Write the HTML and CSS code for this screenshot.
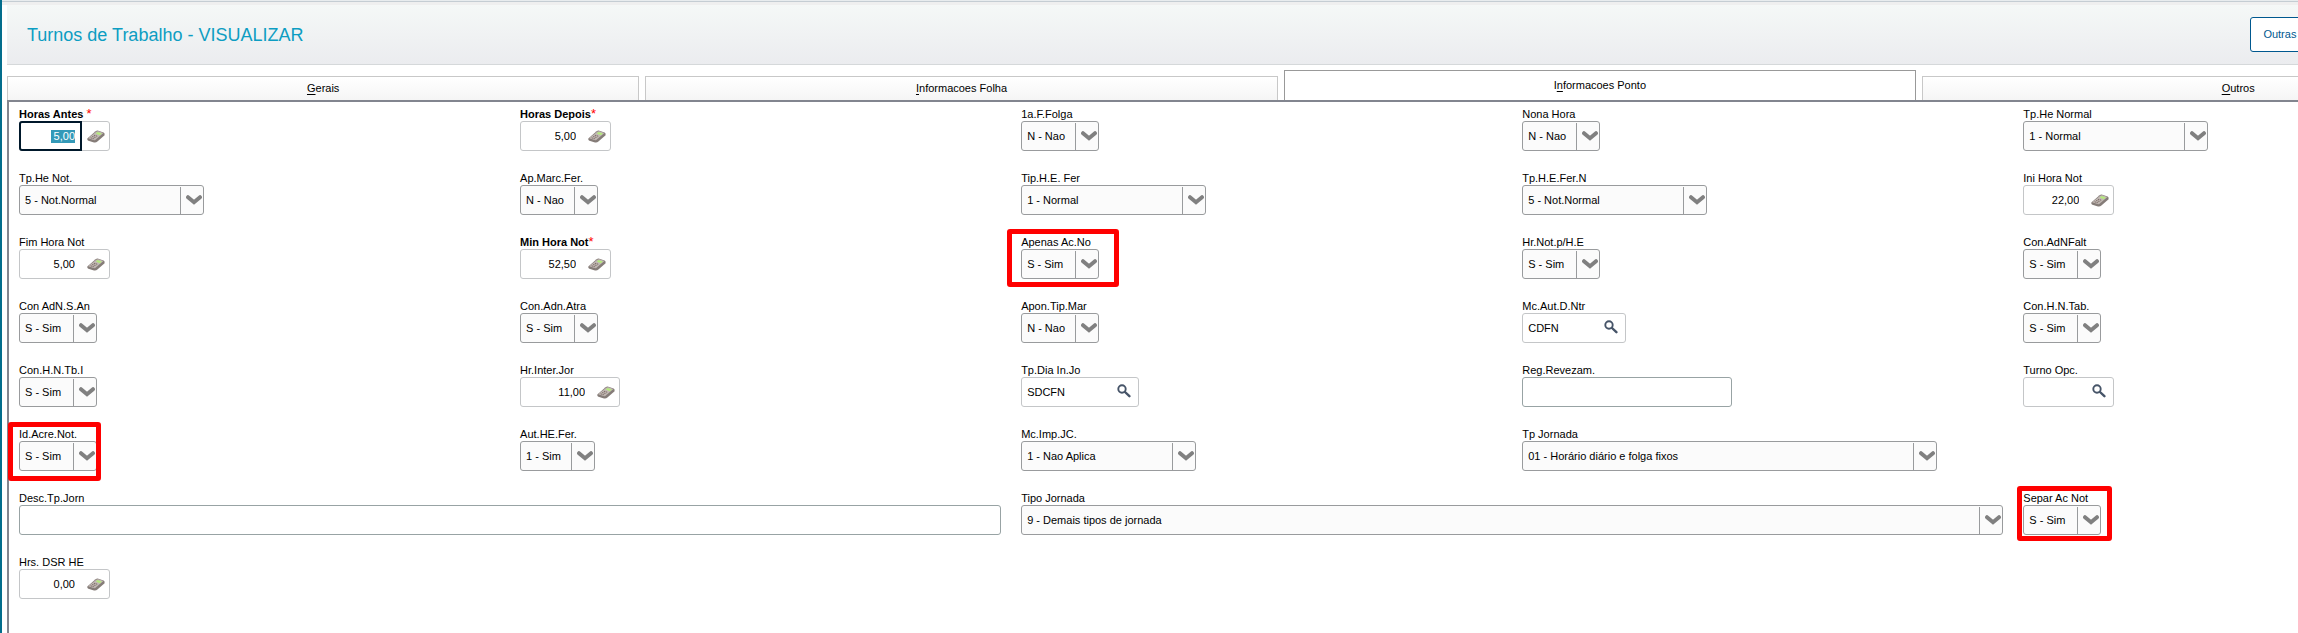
FILE: index.html
```html
<!DOCTYPE html>
<html lang="pt-BR">
<head>
  <meta charset="UTF-8" />
  <meta name="viewport" content="width=device-width, initial-scale=1" />
  <title>Turnos de Trabalho</title>
  <link rel="stylesheet" href="styles.css">
</head>
<body>

  <svg class="sprite" aria-hidden="true">
    <symbol id="chevron" viewBox="0 0 16 10">
      <path d="M2 2.2 L8 7.2 L14 2.2" fill="none" stroke="#808080" stroke-width="4" stroke-linecap="round" />
    </symbol>
    <symbol id="calc" viewBox="0 0 18 13">
      <path d="M.3 8.4 L8.6 1.2 Q9.8 .3 11.4 .7 L16.6 2.4 Q18 3.1 17.6 5.2 L10.4 11.6 Q9 12.8 7 12.4 L1.4 10.8 Q0 10 .3 8.4Z" fill="#857c78" />
      <path d="M1.2 8.2 L9.2 1.8 Q10.2 1 11.4 1.3 L16.4 3 L8.8 9.6 Q7.8 10.4 6.6 10.1Z" fill="#c2b9b4" />
      <path d="M8.8 3.4 L10.6 2 L14.8 3.4 L12.8 5.2Z" fill="#b4ea7c" />
      <path d="M3.6 7.8 L7.6 9 M5.2 6.5 L9.2 7.7 M6.8 5.2 L10.8 6.4" stroke="#7a6a66" stroke-width="1" stroke-dasharray="1.4 .6" />
    </symbol>
    <symbol id="lupa" viewBox="0 0 14 14">
      <circle cx="5" cy="5" r="3.7" fill="none" stroke="#465468" stroke-width="1.9" />
      <path d="M8 8 L12.4 12.2" stroke="#465468" stroke-width="2.4" stroke-linecap="round" />
    </symbol>
  </svg>

  <div class="screen">
    <header class="title-bar">
      <h1>Turnos de Trabalho - VISUALIZAR</h1>
      <button type="button" class="btn-outras">Outras</button>
    </header>

    <nav class="tabs">
      <button type="button" class="tab"><u>G</u>erais</button>
      <button type="button" class="tab"><u>I</u>nformacoes Folha</button>
      <button type="button" class="tab active">I<u>n</u>formacoes Ponto</button>
      <button type="button" class="tab"><u>O</u>utros</button>
    </nav>

    <form class="panel">
      <div class="field required">
        <label for="horasAntes">Horas Antes <em>*</em></label>
        <div class="box number">
          <input type="text" id="horasAntes" value=" 5,00">
          <svg class="icon"><use href="#calc" /></svg>
        </div>
      </div>
      <div class="field required">
        <label for="horasDepois">Horas Depois<em>*</em></label>
        <div class="box number">
          <input type="text" id="horasDepois" value="5,00">
          <svg class="icon"><use href="#calc" /></svg>
        </div>
      </div>
      <div class="field">
        <label for="folga">1a.F.Folga</label>
        <div class="box combo">
          <select id="folga"><option>N - Nao</option></select>
          <svg class="arrow"><use href="#chevron" /></svg>
        </div>
      </div>
      <div class="field">
        <label for="nonaHora">Nona Hora</label>
        <div class="box combo">
          <select id="nonaHora"><option>N - Nao</option></select>
          <svg class="arrow"><use href="#chevron" /></svg>
        </div>
      </div>
      <div class="field">
        <label for="heNormal">Tp.He Normal</label>
        <div class="box combo large">
          <select id="heNormal"><option>1 - Normal</option></select>
          <svg class="arrow"><use href="#chevron" /></svg>
        </div>
      </div>

      <div class="field">
        <label for="heNot">Tp.He Not.</label>
        <div class="box combo large">
          <select id="heNot"><option>5 - Not.Normal</option></select>
          <svg class="arrow"><use href="#chevron" /></svg>
        </div>
      </div>
      <div class="field">
        <label for="marcFer">Ap.Marc.Fer.</label>
        <div class="box combo">
          <select id="marcFer"><option>N - Nao</option></select>
          <svg class="arrow"><use href="#chevron" /></svg>
        </div>
      </div>
      <div class="field">
        <label for="heFer">Tip.H.E. Fer</label>
        <div class="box combo large">
          <select id="heFer"><option>1 - Normal</option></select>
          <svg class="arrow"><use href="#chevron" /></svg>
        </div>
      </div>
      <div class="field">
        <label for="heFerN">Tp.H.E.Fer.N</label>
        <div class="box combo large">
          <select id="heFerN"><option>5 - Not.Normal</option></select>
          <svg class="arrow"><use href="#chevron" /></svg>
        </div>
      </div>
      <div class="field">
        <label for="iniHora">Ini Hora Not</label>
        <div class="box number">
          <input type="text" id="iniHora" value="22,00">
          <svg class="icon"><use href="#calc" /></svg>
        </div>
      </div>

      <div class="field">
        <label for="fimHora">Fim Hora Not</label>
        <div class="box number">
          <input type="text" id="fimHora" value="5,00">
          <svg class="icon"><use href="#calc" /></svg>
        </div>
      </div>
      <div class="field required">
        <label for="minHora">Min Hora Not<em>*</em></label>
        <div class="box number">
          <input type="text" id="minHora" value="52,50">
          <svg class="icon"><use href="#calc" /></svg>
        </div>
      </div>
      <div class="field">
        <label for="apenasAc">Apenas Ac.No</label>
        <div class="box combo">
          <select id="apenasAc"><option>S - Sim</option></select>
          <svg class="arrow"><use href="#chevron" /></svg>
        </div>
        <span class="mark mark-apenas"></span>
      </div>
      <div class="field">
        <label for="hrNot">Hr.Not.p/H.E</label>
        <div class="box combo">
          <select id="hrNot"><option>S - Sim</option></select>
          <svg class="arrow"><use href="#chevron" /></svg>
        </div>
      </div>
      <div class="field">
        <label for="adnFalt">Con.AdNFalt</label>
        <div class="box combo">
          <select id="adnFalt"><option>S - Sim</option></select>
          <svg class="arrow"><use href="#chevron" /></svg>
        </div>
      </div>

      <div class="field">
        <label for="adnSan">Con AdN.S.An</label>
        <div class="box combo">
          <select id="adnSan"><option>S - Sim</option></select>
          <svg class="arrow"><use href="#chevron" /></svg>
        </div>
      </div>
      <div class="field">
        <label for="adnAtra">Con.Adn.Atra</label>
        <div class="box combo">
          <select id="adnAtra"><option>S - Sim</option></select>
          <svg class="arrow"><use href="#chevron" /></svg>
        </div>
      </div>
      <div class="field">
        <label for="tipMar">Apon.Tip.Mar</label>
        <div class="box combo">
          <select id="tipMar"><option>N - Nao</option></select>
          <svg class="arrow"><use href="#chevron" /></svg>
        </div>
      </div>
      <div class="field">
        <label for="autNtr">Mc.Aut.D.Ntr</label>
        <div class="box lookup w104">
          <input type="text" id="autNtr" value="CDFN">
          <svg class="lupa"><use href="#lupa" /></svg>
        </div>
      </div>
      <div class="field">
        <label for="hnTab">Con.H.N.Tab.</label>
        <div class="box combo">
          <select id="hnTab"><option>S - Sim</option></select>
          <svg class="arrow"><use href="#chevron" /></svg>
        </div>
      </div>

      <div class="field">
        <label for="hnTbI">Con.H.N.Tb.I</label>
        <div class="box combo">
          <select id="hnTbI"><option>S - Sim</option></select>
          <svg class="arrow"><use href="#chevron" /></svg>
        </div>
      </div>
      <div class="field">
        <label for="interJor">Hr.Inter.Jor</label>
        <div class="box number w100">
          <input type="text" id="interJor" value="11,00">
          <svg class="icon"><use href="#calc" /></svg>
        </div>
      </div>
      <div class="field">
        <label for="diaIn">Tp.Dia In.Jo</label>
        <div class="box lookup w118">
          <input type="text" id="diaIn" value="SDCFN">
          <svg class="lupa"><use href="#lupa" /></svg>
        </div>
      </div>
      <div class="field">
        <label for="revezam">Reg.Revezam.</label>
        <div class="box plain w210">
          <input type="text" id="revezam">
        </div>
      </div>
      <div class="field">
        <label for="turnoOpc">Turno Opc.</label>
        <div class="box lookup">
          <input type="text" id="turnoOpc">
          <svg class="lupa"><use href="#lupa" /></svg>
        </div>
      </div>

      <div class="field">
        <label for="acreNot">Id.Acre.Not.</label>
        <div class="box combo">
          <select id="acreNot"><option>S - Sim</option></select>
          <svg class="arrow"><use href="#chevron" /></svg>
        </div>
        <span class="mark mark-acre"></span>
      </div>
      <div class="field">
        <label for="autHe">Aut.HE.Fer.</label>
        <div class="box combo w75">
          <select id="autHe"><option>1 - Sim</option></select>
          <svg class="arrow"><use href="#chevron" /></svg>
        </div>
      </div>
      <div class="field">
        <label for="impJc">Mc.Imp.JC.</label>
        <div class="box combo w175">
          <select id="impJc"><option>1 - Nao Aplica</option></select>
          <svg class="arrow"><use href="#chevron" /></svg>
        </div>
      </div>
      <div class="field two-cols">
        <label for="tpJornada">Tp Jornada</label>
        <div class="box combo w415">
          <select id="tpJornada"><option>01 - Horário diário e folga fixos</option></select>
          <svg class="arrow"><use href="#chevron" /></svg>
        </div>
      </div>

      <div class="field two-cols">
        <label for="descJorn">Desc.Tp.Jorn</label>
        <div class="box plain">
          <input type="text" id="descJorn">
        </div>
      </div>
      <div class="field two-cols">
        <label for="tipoJornada">Tipo Jornada</label>
        <div class="box combo full">
          <select id="tipoJornada"><option>9 - Demais tipos de jornada</option></select>
          <svg class="arrow"><use href="#chevron" /></svg>
        </div>
      </div>
      <div class="field">
        <label for="separAc">Separ Ac Not</label>
        <div class="box combo">
          <select id="separAc"><option>S - Sim</option></select>
          <svg class="arrow"><use href="#chevron" /></svg>
        </div>
        <span class="mark mark-separ"></span>
      </div>

      <div class="field">
        <label for="dsrHe">Hrs. DSR HE</label>
        <div class="box number">
          <input type="text" id="dsrHe" value="0,00">
          <svg class="icon"><use href="#calc" /></svg>
        </div>
      </div>
    </form>
  </div>

  <script>
    const first = document.getElementById("horasAntes");
    first.focus();
    first.select();
  </script>

</body>
</html>
```
FILE: styles.css
```css
:root {
  --stripe: #036d8c;
  --panel-line: #82858f;
  --combo-line: #999b9d;
  --input-line: #c4c6c8;
  --title: #0d9dc2;
  --link: #00588f;
}

* {
  box-sizing: border-box;
}

html {
  overflow: hidden;
}

body {
  margin: 0;
  min-height: 100vh;
  display: flex;
  overflow: hidden;
  border-left: 2px solid var(--stripe);
  background: #fff;
  color: #000;
  font-family: Arial, "Liberation Sans", sans-serif;
  font-size: 11px;
  line-height: 13px;
}

button,
input,
select {
  font: inherit;
  color: inherit;
}

.sprite {
  position: absolute;
  width: 0;
  height: 0;
}

/* a tela passa da borda direita da janela */
.screen {
  flex: none;
  width: 111.2vw;
  display: flex;
  flex-direction: column;
  padding-left: 5px;
  background: linear-gradient(#e8ecee 0 1px, #c5cdd3 1px 2px, #efefef 2px 5px, transparent 5px);
}

.title-bar {
  display: flex;
  align-items: center;
  justify-content: space-between;
  height: 60px;
  margin-top: 5px;
  padding: 0 197px 0 20px;
  background: linear-gradient(#f5f8f7, #ebecef);
  border-bottom: 1px solid #d5d8da;
}

.title-bar h1 {
  margin: 0;
  font-size: 18px;
  line-height: 20px;
  font-weight: normal;
  color: var(--title);
}

.btn-outras {
  width: 110px;
  height: 35px;
  padding: 0 12px;
  text-align: left;
  color: var(--link);
  background: #fff;
  border: 1px solid var(--link);
  border-radius: 3px;
}

.tabs {
  display: flex;
  align-items: flex-end;
  gap: 6px;
  height: 35px;
  padding-right: 3px;
}

.tab {
  flex: 1;
  height: 24px;
  padding: 0;
  background: linear-gradient(#fff, #f5f5f5);
  border: 1px solid #c8c8c8;
  border-bottom: 0;
}

.tab u {
  text-underline-offset: 2px;
}

.tab.active {
  height: 30px;
  background: #fff;
  border-color: #999;
}

.panel {
  flex: 1;
  display: grid;
  grid-template-columns: repeat(5, minmax(0, 1fr));
  align-content: start;
  gap: 20px;
  padding: 5px 53px 20px 10px;
  border-top: 2px solid var(--panel-line);
  border-left: 2px solid var(--panel-line);
}

.field {
  position: relative;
}

.two-cols {
  grid-column: span 2;
}

.field label {
  display: block;
  height: 14px;
  line-height: 15px;
}

.required label {
  font-weight: bold;
}

.required em {
  font-style: normal;
  font-weight: normal;
  font-size: 13px;
  line-height: 1;
  color: #f00;
}

.box {
  display: flex;
  align-items: center;
  width: 91px;
  height: 30px;
  background: #fff;
  border: 1px solid var(--input-line);
  border-radius: 3px;
}

.box input {
  flex: 1;
  min-width: 0;
  align-self: stretch;
  padding: 0 5px;
  background: transparent;
  border: 0;
  outline: none;
}

.number input {
  margin: -1px 0 -1px -1px;
  text-align: right;
  white-space: pre;
  border: 2px solid transparent;
  border-radius: 3px 0 0 3px;
}

.number input:focus {
  border-color: #00182b;
}

.number input::selection {
  background: #3399b8;
  color: #fff;
}

.icon {
  width: 18px;
  height: 13px;
  margin: 0 4px 0 5px;
}

.lupa {
  width: 14px;
  height: 14px;
  margin: 0 7px 2px 0;
}

.combo {
  width: 78px;
  background: #fbfbfb;
  border-color: var(--combo-line);
}

.combo select {
  flex: 1;
  min-width: 0;
  height: 27px;
  align-self: flex-end;
  padding: 0 0 1px 5px;
  appearance: none;
  background: transparent;
  border: 0;
  border-right: 1px solid var(--combo-line);
  border-radius: 0;
  outline: none;
}

.arrow {
  width: 16px;
  height: 10px;
  margin: 0 1px 0 5px;
  pointer-events: none;
}

.plain {
  width: 100%;
  border-color: #98a3a4;
}

.large {
  width: 185px;
}

.full {
  width: 100%;
}

.w75 {
  width: 75px;
}

.w100 {
  width: 100px;
}

.w104 {
  width: 104px;
}

.w118 {
  width: 118px;
}

.w175 {
  width: 175px;
}

.w210 {
  width: 210px;
}

.w415 {
  width: 415px;
}

/* marcações em vermelho sobre os campos */
.mark {
  position: absolute;
  border: 5px solid #f00;
  border-radius: 3px;
  pointer-events: none;
}

.mark-apenas {
  top: -6px;
  left: -14px;
  width: 112px;
  height: 58px;
}

.mark-acre {
  top: -5px;
  left: -11px;
  width: 93px;
  height: 59px;
}

.mark-separ {
  top: -5px;
  left: -6px;
  width: 95px;
  height: 55px;
}
```
